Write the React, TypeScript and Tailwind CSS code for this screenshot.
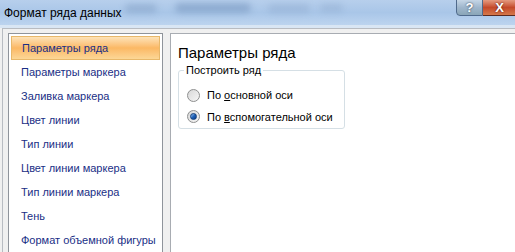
import React from 'react'

const ITEMS = [
  'Параметры ряда',
  'Параметры маркера',
  'Заливка маркера',
  'Цвет линии',
  'Тип линии',
  'Цвет линии маркера',
  'Тип линии маркера',
  'Тень',
  'Формат объемной фигуры',
]

function Radio({ checked }: { checked?: boolean }) {
  return (
    <div className="w-[13px] h-[13px] rounded-full border border-[#8e8f8f] bg-gradient-to-br from-[#d8d8d8] to-[#f6f6f6] flex items-center justify-center shrink-0">
      {checked && (
        <div className="w-[7px] h-[7px] rounded-full bg-gradient-to-br from-[#9cc7f4] via-[#1f62b8] to-[#0b3a86] border border-[#113e7a]" />
      )}
    </div>
  )
}

export default function App() {
  return (
    <div className="w-[515px] h-[252px] overflow-hidden bg-[#f0f0f0] font-['Liberation_Sans',sans-serif] text-[11px]">
      {/* Title bar */}
      <div className="relative h-[25px] bg-gradient-to-b from-[#b7cfec] via-[#a9c6e8] to-[#bcd4ef] overflow-hidden">
        <div className="absolute left-[125px] top-[4px] w-[32px] h-[9px] rounded-full bg-[#7f9dc4]/50 blur-[3px]" />
        <div className="absolute left-[175px] top-[3px] w-[76px] h-[10px] rounded-full bg-[#6f8fb9]/50 blur-[3px]" />
        <div className="absolute left-[268px] top-[4px] w-[42px] h-[9px] rounded-full bg-[#8aa6cb]/40 blur-[3px]" />
        <div className="absolute left-[320px] top-[4px] w-[23px] h-[8px] rounded-full bg-[#8aa6cb]/40 blur-[3px]" />
        <div className="absolute left-[4px] top-[5px] text-[#000] text-[12px] leading-[16px] whitespace-nowrap">Формат ряда данных</div>
        {/* help / close */}
        <div className="absolute right-[-2px] top-[-1px] flex">
          <div className="w-[27px] h-[17px] rounded-bl-[4px] border border-[#4f6a8c] bg-gradient-to-b from-[#c6d6e6] via-[#9fb6cc] to-[#8aa6b8] flex items-center justify-center text-white font-bold text-[13px] leading-none [text-shadow:0_0_2px_#203040]">
            ?
          </div>
          <div className="w-[34px] h-[17px] border border-l-0 border-[#5a2a20] bg-gradient-to-b from-[#e49a80] via-[#c4492a] to-[#d5784a] flex items-center justify-center text-white font-bold text-[13px] leading-none [text-shadow:0_0_2px_#401010]">
            X
          </div>
        </div>
      </div>
      <div className="h-[3px] bg-[#d9e6f4]" />

      {/* Client area */}
      <div className="ml-[2px] h-[230px] border-l border-t border-[#b8bcc2] bg-[#f0f0f0] flex gap-[7px] pl-[5px] pt-[4px]">
        {/* Category list */}
        <div className="w-[155px] h-[240px] border border-[#8f949b] bg-white px-[2px] pt-[2px] shrink-0">
          {ITEMS.map((item, i) => (
            <div
              key={item}
              className={`h-[24px] flex items-center pl-[10px] text-[#1a2f86] whitespace-nowrap ${
                i === 0
                  ? 'bg-gradient-to-b from-[#fde3b8] via-[#fbb864] to-[#fcd796] border border-[#e8b86a]'
                  : ''
              }`}
            >
              {item}
            </div>
          ))}
        </div>

        {/* Options panel */}
        <div className="flex-1 h-[240px] border-l border-t border-[#a8acb2] bg-white pl-[7px] pt-[9px]">
          <div className="text-[15px] leading-[20px] text-[#000] whitespace-nowrap">Параметры ряда</div>
          <fieldset className="w-[167px] h-[66px] border border-[#d5dfe5] rounded-[3px] pl-[5px]">
            <legend className="px-[2px] text-[11px] leading-[14px] whitespace-nowrap">Построить ряд</legend>
            <div className="flex flex-col gap-[5px] pl-[3px] pt-[10px]">
              <div className="flex items-center gap-[7px] whitespace-nowrap">
                <Radio />
                <span>
                  По <span className="underline">о</span>сновной оси
                </span>
              </div>
              <div className="flex items-center gap-[7px] whitespace-nowrap">
                <Radio checked />
                <span>
                  По <span className="underline">в</span>спомогательной оси
                </span>
              </div>
            </div>
          </fieldset>
        </div>
      </div>
    </div>
  )
}
